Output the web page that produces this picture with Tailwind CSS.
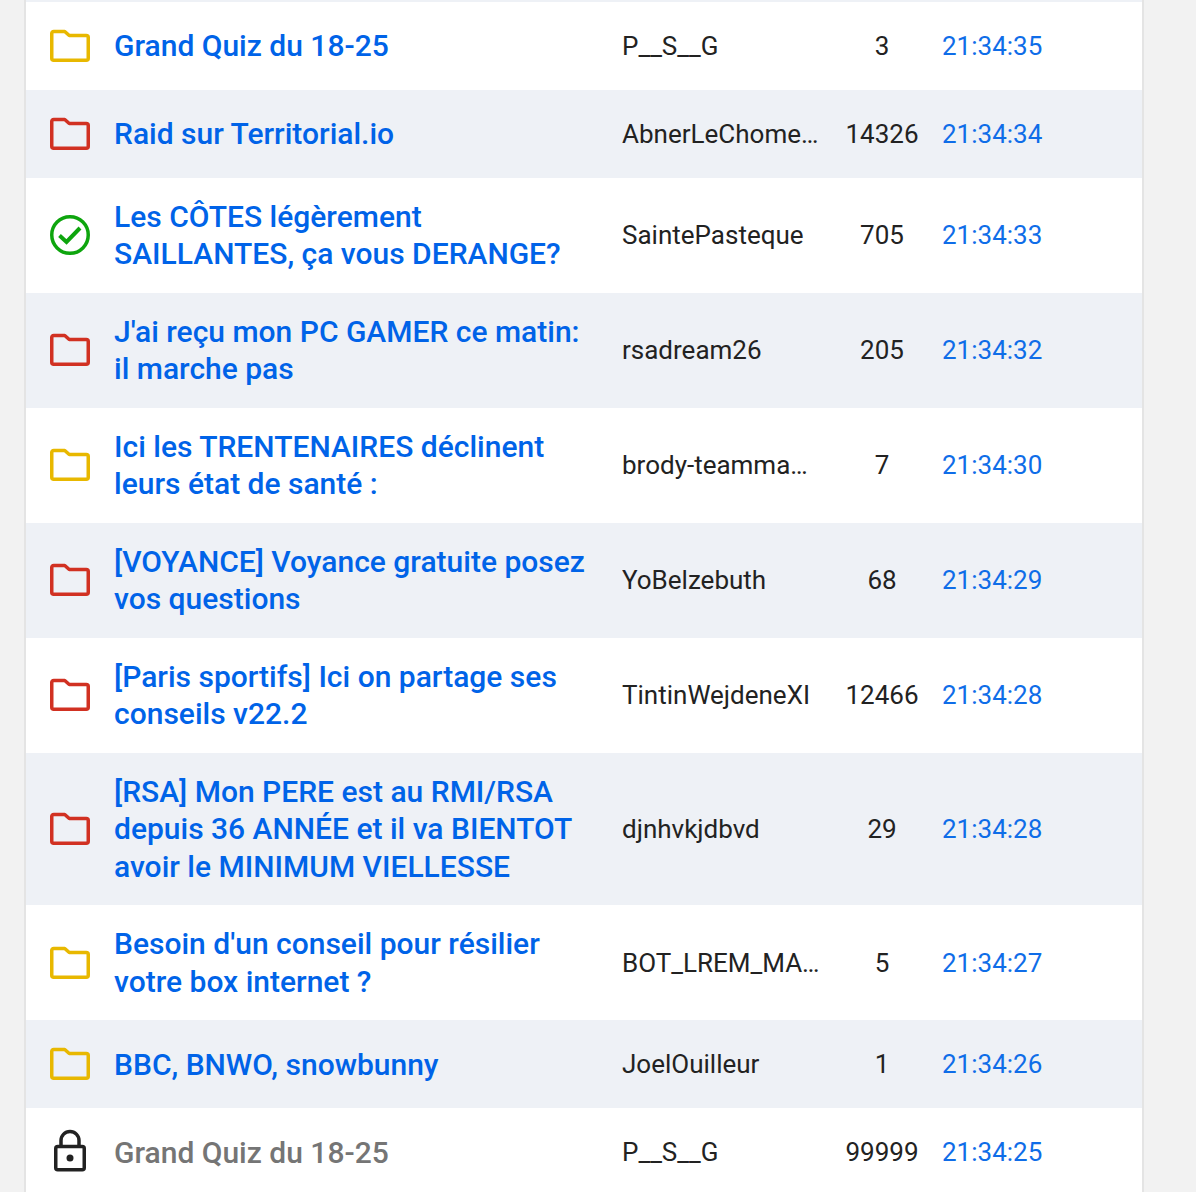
<!DOCTYPE html>
<html><head><meta charset="utf-8"><script src="https://cdn.jsdelivr.net/npm/@tailwindcss/browser@4"></script></head>
<body class="bg-[#f2f2f2] font-['Roboto',sans-serif] overflow-hidden h-[1192px]">
<div class="w-[1120px] ml-6 border-x-2 border-[#e4e4e4] bg-[#eef1f6] pt-[1.75px] text-[26px] leading-[37.5px] text-[#222]">

<div class="grid grid-cols-[88px_508px_200px_120px_1fr] items-center min-h-[88px] py-5 bg-white">
<div class="pl-6"><svg class="w-10 h-10 text-[#e8b800]" viewBox="0 0 40 40" fill="none" stroke="currentColor" stroke-width="3.5" stroke-linejoin="round"><path d="M1.750 7.500a2 2 0 0 1 2-2h11l4.500 4h17a2 2 0 0 1 2 2v20.750a2 2 0 0 1-2 2h-32.500a2 2 0 0 1-2-2z"/></svg></div>
<a class="font-medium text-[#0063e8] pr-5 text-[30px]">Grand Quiz du 18-25</a>
<div class="truncate pt-px">P__S__G</div><div class="text-center pt-px">3</div><div class="text-[#0f6de8] pt-px">21:34:35</div></div>

<div class="grid grid-cols-[88px_508px_200px_120px_1fr] items-center min-h-[88px] py-5 bg-[#eef1f6]">
<div class="pl-6"><svg class="w-10 h-10 text-[#d13122]" viewBox="0 0 40 40" fill="none" stroke="currentColor" stroke-width="3.5" stroke-linejoin="round"><path d="M1.750 7.500a2 2 0 0 1 2-2h11l4.500 4h17a2 2 0 0 1 2 2v20.750a2 2 0 0 1-2 2h-32.500a2 2 0 0 1-2-2z"/></svg></div>
<a class="font-medium text-[#0063e8] pr-5 text-[30px]">Raid sur Territorial.io</a>
<div class="truncate pt-px">AbnerLeChomeurDu93</div><div class="text-center pt-px">14326</div><div class="text-[#0f6de8] pt-px">21:34:34</div></div>

<div class="grid grid-cols-[88px_508px_200px_120px_1fr] items-center min-h-[88px] py-5 bg-white">
<div class="pl-6"><svg class="w-10 h-10 text-[#0ea50e]" viewBox="0 0 40 40" fill="none" stroke="currentColor" stroke-width="3.500"><circle cx="20" cy="20" r="18.250"/><path stroke-width="4" d="M9.500 20.500l7 6.500L30 13"/></svg></div>
<a class="font-medium text-[#0063e8] pr-5 text-[30px]">Les CÔTES légèrement SAILLANTES, ça vous DERANGE?</a>
<div class="truncate">SaintePasteque</div><div class="text-center">705</div><div class="text-[#0f6de8]">21:34:33</div></div>

<div class="grid grid-cols-[88px_508px_200px_120px_1fr] items-center min-h-[88px] py-5 bg-[#eef1f6]">
<div class="pl-6"><svg class="w-10 h-10 text-[#d13122]" viewBox="0 0 40 40" fill="none" stroke="currentColor" stroke-width="3.5" stroke-linejoin="round"><path d="M1.750 7.500a2 2 0 0 1 2-2h11l4.500 4h17a2 2 0 0 1 2 2v20.750a2 2 0 0 1-2 2h-32.500a2 2 0 0 1-2-2z"/></svg></div>
<a class="font-medium text-[#0063e8] pr-5 text-[30px]">J'ai reçu mon PC GAMER ce matin: il marche pas</a>
<div class="truncate">rsadream26</div><div class="text-center">205</div><div class="text-[#0f6de8]">21:34:32</div></div>

<div class="grid grid-cols-[88px_508px_200px_120px_1fr] items-center min-h-[88px] py-5 bg-white">
<div class="pl-6"><svg class="w-10 h-10 text-[#e8b800]" viewBox="0 0 40 40" fill="none" stroke="currentColor" stroke-width="3.5" stroke-linejoin="round"><path d="M1.750 7.500a2 2 0 0 1 2-2h11l4.500 4h17a2 2 0 0 1 2 2v20.750a2 2 0 0 1-2 2h-32.500a2 2 0 0 1-2-2z"/></svg></div>
<a class="font-medium text-[#0063e8] pr-5 text-[30px]">Ici les TRENTENAIRES déclinent leurs état de santé :</a>
<div class="truncate">brody-teammaWWW</div><div class="text-center">7</div><div class="text-[#0f6de8]">21:34:30</div></div>

<div class="grid grid-cols-[88px_508px_200px_120px_1fr] items-center min-h-[88px] py-5 bg-[#eef1f6]">
<div class="pl-6"><svg class="w-10 h-10 text-[#d13122]" viewBox="0 0 40 40" fill="none" stroke="currentColor" stroke-width="3.5" stroke-linejoin="round"><path d="M1.750 7.500a2 2 0 0 1 2-2h11l4.500 4h17a2 2 0 0 1 2 2v20.750a2 2 0 0 1-2 2h-32.500a2 2 0 0 1-2-2z"/></svg></div>
<a class="font-medium text-[#0063e8] pr-5 text-[30px]">[VOYANCE] Voyance gratuite posez vos questions</a>
<div class="truncate">YoBelzebuth</div><div class="text-center">68</div><div class="text-[#0f6de8]">21:34:29</div></div>

<div class="grid grid-cols-[88px_508px_200px_120px_1fr] items-center min-h-[88px] py-5 bg-white">
<div class="pl-6"><svg class="w-10 h-10 text-[#d13122]" viewBox="0 0 40 40" fill="none" stroke="currentColor" stroke-width="3.5" stroke-linejoin="round"><path d="M1.750 7.500a2 2 0 0 1 2-2h11l4.500 4h17a2 2 0 0 1 2 2v20.750a2 2 0 0 1-2 2h-32.500a2 2 0 0 1-2-2z"/></svg></div>
<a class="font-medium text-[#0063e8] pr-5 text-[30px]">[Paris sportifs] Ici on partage ses conseils v22.2</a>
<div class="truncate">TintinWejdeneXI</div><div class="text-center">12466</div><div class="text-[#0f6de8]">21:34:28</div></div>

<div class="grid grid-cols-[88px_508px_200px_120px_1fr] items-center min-h-[88px] py-5 bg-[#eef1f6]">
<div class="pl-6"><svg class="w-10 h-10 text-[#d13122]" viewBox="0 0 40 40" fill="none" stroke="currentColor" stroke-width="3.5" stroke-linejoin="round"><path d="M1.750 7.500a2 2 0 0 1 2-2h11l4.500 4h17a2 2 0 0 1 2 2v20.750a2 2 0 0 1-2 2h-32.500a2 2 0 0 1-2-2z"/></svg></div>
<a class="font-medium text-[#0063e8] pr-5 text-[30px]">[RSA] Mon PERE est au RMI/RSA depuis 36 ANNÉE et il va BIENTOT avoir le MINIMUM VIELLESSE</a>
<div class="truncate pt-px">djnhvkjdbvd</div><div class="text-center pt-px">29</div><div class="text-[#0f6de8] pt-px">21:34:28</div></div>

<div class="grid grid-cols-[88px_508px_200px_120px_1fr] items-center min-h-[88px] py-5 bg-white">
<div class="pl-6"><svg class="w-10 h-10 text-[#e8b800]" viewBox="0 0 40 40" fill="none" stroke="currentColor" stroke-width="3.5" stroke-linejoin="round"><path d="M1.750 7.500a2 2 0 0 1 2-2h11l4.500 4h17a2 2 0 0 1 2 2v20.750a2 2 0 0 1-2 2h-32.500a2 2 0 0 1-2-2z"/></svg></div>
<a class="font-medium text-[#0063e8] pr-5 text-[30px]">Besoin d'un conseil pour résilier votre box internet ?</a>
<div class="truncate pt-px">BOT_LREM_MACRON</div><div class="text-center pt-px">5</div><div class="text-[#0f6de8] pt-px">21:34:27</div></div>

<div class="grid grid-cols-[88px_508px_200px_120px_1fr] items-center min-h-[88px] py-5 bg-[#eef1f6]">
<div class="pl-6"><svg class="w-10 h-10 text-[#e8b800]" viewBox="0 0 40 40" fill="none" stroke="currentColor" stroke-width="3.5" stroke-linejoin="round"><path d="M1.750 7.500a2 2 0 0 1 2-2h11l4.500 4h17a2 2 0 0 1 2 2v20.750a2 2 0 0 1-2 2h-32.500a2 2 0 0 1-2-2z"/></svg></div>
<a class="font-medium text-[#0063e8] pr-5 text-[30px]">BBC, BNWO, snowbunny</a>
<div class="truncate">JoelOuilleur</div><div class="text-center">1</div><div class="text-[#0f6de8]">21:34:26</div></div>

<div class="grid grid-cols-[88px_508px_200px_120px_1fr] items-center min-h-[88px] py-5 bg-white">
<div class="pl-6"><svg class="w-10 h-12 text-[#222]" viewBox="0 0 40 48" fill="none" stroke="currentColor" stroke-width="3.5" stroke-linejoin="round"><rect x="5.750" y="18.500" width="28.500" height="23.250" rx="2"/><path d="M11 18.500V12.500a9 9 0 0 1 18 0V18.500"/><circle cx="20" cy="30" r="3.500" fill="currentColor" stroke="none"/></svg></div>
<a class="font-medium text-[#757575] pr-5 text-[30px]">Grand Quiz du 18-25</a>
<div class="truncate">P__S__G</div><div class="text-center">99999</div><div class="text-[#0f6de8]">21:34:25</div></div>

</div>
</body></html>
